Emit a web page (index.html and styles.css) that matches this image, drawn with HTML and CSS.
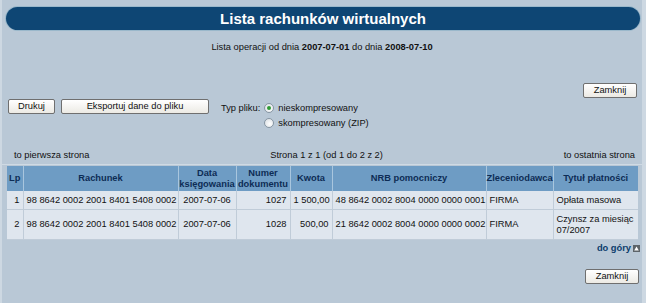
FILE: index.html
```html
<!DOCTYPE html>
<html lang="pl">
<head>
<meta charset="utf-8">
<title>Lista rachunków wirtualnych</title>
<link rel="stylesheet" href="styles.css">
</head>
<body>
<div class="page">
  <div class="title">Lista rachunków wirtualnych</div>
  <div class="period">Lista operacji od dnia <b>2007-07-01</b> do dnia <b>2008-07-10</b></div>
  <div class="close-row"><button class="btn btn-close">Zamknij</button></div>
  <div class="toolbar">
    <button class="btn btn-print">Drukuj</button>
    <button class="btn btn-export">Eksportuj dane do pliku</button>
    <div class="filetype">
      <span class="ft-label">Typ pliku:</span>
      <div class="options">
        <label class="opt"><span class="radio checked"></span>nieskompresowany</label>
        <label class="opt"><span class="radio"></span>skompresowany (ZIP)</label>
      </div>
    </div>
  </div>
  <div class="pager">
    <span>to pierwsza strona</span>
    <span>Strona 1 z 1 (od 1 do 2 z 2)</span>
    <span>to ostatnia strona</span>
  </div>
  <table class="grid">
    <colgroup>
      <col class="c-lp"><col class="c-acc"><col class="c-date"><col class="c-doc"><col class="c-amt"><col class="c-nrb"><col class="c-who"><col class="c-tit">
    </colgroup>
    <thead>
      <tr>
        <th>Lp</th><th>Rachunek</th><th>Data<br>księgowania</th><th>Numer<br>dokumentu</th><th>Kwota</th><th>NRB pomocniczy</th><th>Zleceniodawca</th><th>Tytuł płatności</th>
      </tr>
    </thead>
    <tbody>
      <tr class="r1">
        <td class="num">1</td><td>98 8642 0002 2001 8401 5408 0002</td><td class="ctr">2007-07-06</td><td class="num">1027</td><td class="num">1 500,00</td><td>48 8642 0002 8004 0000 0000 0001</td><td>FIRMA</td><td>Opłata masowa</td>
      </tr>
      <tr class="r2">
        <td class="num">2</td><td>98 8642 0002 2001 8401 5408 0002</td><td class="ctr">2007-07-06</td><td class="num">1028</td><td class="num">500,00</td><td>21 8642 0002 8004 0000 0000 0002</td><td>FIRMA</td><td>Czynsz za miesiąc 07/2007</td>
      </tr>
    </tbody>
  </table>
  <div class="totop"><a href="#">do góry</a><svg class="up" width="7" height="7" viewBox="0 0 7 7"><rect x="0" y="0" width="7" height="7" fill="#5d6469"/><path d="M1.2 5.6 L3.5 1.4 L5.8 5.6 Z" fill="#ffffff"/></svg></div>
  <div class="close-row bottom"><button class="btn btn-close">Zamknij</button></div>
</div>
</body>
</html>
```
FILE: styles.css
```css
html, body {
  margin: 0;
  padding: 0;
}
body {
  background: #cdd8e2;
  font-family: "Liberation Sans", Arial, sans-serif;
  font-size: 9.3px;
  color: #111;
}
.page {
  width: 640px;
  height: 303px;
  margin-left: 2px;
  background: #b9c8d6;
  padding-top: 7px;
  box-sizing: border-box;
  display: flex;
  flex-direction: column;
}
.title {
  margin: 0 2px 0 4px;
  height: 23px;
  border-radius: 12px;
  background: #0e4674;
  box-shadow: 0 0 0 1px #9ab8cb;
  color: #fff;
  font-weight: bold;
  font-size: 15px;
  line-height: 23px;
  text-align: center;
}
.period {
  margin-top: 11px;
  height: 12px;
  line-height: 12px;
  text-align: center;
}
.close-row {
  display: flex;
  justify-content: flex-end;
  padding-right: 5px;
  margin-top: 30px;
}
.close-row.bottom {
  margin-top: 16px;
  padding-right: 3px;
}
.btn {
  height: 15px;
  padding: 0;
  border: 1px solid #6f6f6f;
  border-radius: 2px;
  background: linear-gradient(#ffffff, #eceae4);
  font-family: "Liberation Sans", Arial, sans-serif;
  font-size: 9.3px;
  color: #111;
  line-height: 13px;
}
.btn-close { width: 54px; }
.btn-print { width: 47px; }
.btn-export { width: 148px; }
.toolbar {
  display: flex;
  align-items: flex-start;
  margin-top: 1px;
  padding-left: 6px;
  gap: 6px;
}
.filetype {
  display: flex;
  align-items: flex-start;
  margin-left: 6px;
  margin-top: 3px;
}
.ft-label {
  line-height: 12px;
  margin-right: 4px;
}
.options {
  display: flex;
  flex-direction: column;
  gap: 3px;
}
.opt {
  display: flex;
  align-items: center;
  height: 12px;
}
.radio {
  width: 8px;
  height: 8px;
  border: 1px solid #8796a3;
  border-radius: 50%;
  background: radial-gradient(circle at 60% 60%, #ffffff, #d5dbe0);
  margin-right: 4px;
  position: relative;
}
.radio.checked::after {
  content: "";
  position: absolute;
  left: 2px;
  top: 2px;
  width: 4px;
  height: 4px;
  border-radius: 50%;
  background: #2f9a35;
}
.pager {
  display: flex;
  justify-content: space-between;
  margin-top: 20px;
  padding: 0 7px 3px 12px;
  line-height: 12px;
  border-bottom: 1px solid #cfdae4;
}
.grid {
  margin: 1px 0 0 5px;
  width: 631px;
  border-collapse: collapse;
  table-layout: fixed;
}
.c-lp { width: 16px; }
.c-acc { width: 155px; }
.c-date { width: 58px; }
.c-doc { width: 54px; }
.c-amt { width: 42px; }
.c-nrb { width: 154px; }
.c-who { width: 67px; }
.c-tit { width: 85px; }
.grid th {
  background: #6e9cc4;
  color: #0d2c55;
  font-weight: bold;
  height: 25px;
  padding: 0;
  line-height: 11px;
  text-align: center;
  border-left: 1px solid #a9c6de;
  border-right: 1px solid #a9c6de;
}
.grid th:first-child { border-left: none; }
.grid th:last-child { border-right: none; }
.grid td {
  background: #dfe6ee;
  padding: 0 3px;
  line-height: 11px;
  white-space: nowrap;
  overflow: hidden;
  border: 1px solid #c0ccd8;
  border-top: none;
}
.grid td:first-child { border-left: none; }
.grid td:last-child { border-right: none; white-space: normal; }
.grid tr.r1 td { height: 18px; }
.grid tr.r2 td { height: 29px; }
.grid td.num { text-align: right; }
.grid td.ctr { text-align: center; }
.totop {
  display: flex;
  justify-content: flex-end;
  align-items: center;
  gap: 2px;
  margin-top: 3px;
  padding-right: 2px;
}
.totop a {
  color: #0c3d6c;
  font-weight: bold;
  text-decoration: none;
}
.up { display: block; }
```
